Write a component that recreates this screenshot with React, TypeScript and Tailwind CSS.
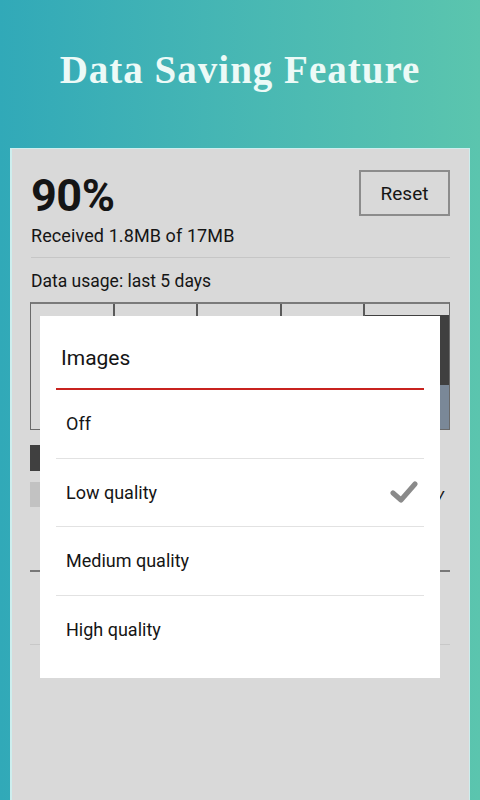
import React from 'react';

const options = ['Off', 'Low quality', 'Medium quality', 'High quality'];

const CheckMark: React.FC = () => (
  <svg width="28" height="24" viewBox="0 0 28 24" fill="none">
    <path d="M3 13 L11 20 L25 4" stroke="#8a8a8a" strokeWidth="5" strokeLinecap="round" strokeLinejoin="round" />
  </svg>
);

const App: React.FC = () => {
  const selected = 'Low quality';

  return (
    <div className="w-[480px] h-[800px] flex flex-col bg-gradient-to-r from-[#31a9b8] to-[#5bc5ae] font-['Roboto','Liberation_Sans',sans-serif] text-[#151515] overflow-hidden">
      {/* Header */}
      <div className="h-[148px] flex items-center justify-center pb-[8px]">
        <h1 className="font-['Liberation_Serif',serif] font-bold text-[39px] text-[#ecfaf7] tracking-[1px]">
          Data Saving Feature
        </h1>
      </div>

      {/* Card */}
      <div className="relative flex-1 mx-[10px] bg-[#d9d9d9] border-l-2 border-r border-t border-[#cdeeee]">
        <div className="pl-[19px] pr-[19px]">
          {/* Top row */}
          <div className="flex justify-between items-start pt-[21px]">
            <div className="text-[45px] font-bold leading-none mt-[3px] tracking-[-0.5px]">90%</div>
            <button className="w-[91px] h-[46px] border-2 border-[#8c8c8c] text-[19px] flex items-center justify-center pt-[3px]">
              Reset
            </button>
          </div>
          <div className="text-[18px] leading-[24px] mt-[6px] tracking-[0.1px]">Received 1.8MB of 17MB</div>
          <div className="h-px bg-[#c6c6c6] mt-[9px]" />

          <div className="text-[17.5px] leading-[24px] mt-[11px]">Data usage: last 5 days</div>

          {/* Chart */}
          <div className="mt-[9px] h-[128px] -ml-px border border-[#6a6a6a] border-t-2 border-t-[#7a7a7a] grid grid-cols-5">
            <div className="border-r-2 border-[#5a5a5a]" />
            <div className="border-r-2 border-[#5a5a5a]" />
            <div className="border-r-2 border-[#5a5a5a]" />
            <div className="border-r-2 border-[#5a5a5a]" />
            <div className="flex flex-col pt-[11px]">
              <div className="h-[70px] bg-[#404040]" />
              <div className="flex-1 bg-[#7a8898]" />
            </div>
          </div>

          {/* Legend */}
          <div className="mt-[15px] flex items-center h-[26px]">
            <div className="w-[26px] h-[26px] bg-[#404040] -ml-px" />
          </div>
          <div className="mt-[11px] flex items-center justify-between h-[25px]">
            <div className="w-[26px] h-[25px] bg-[#c2c2c2] -ml-px" />
            <div className="text-[17px] italic mr-[6px]">Saved today</div>
          </div>

          <div className="mt-[63px] h-[2px] bg-[#777777] -ml-px" />
          <div className="mt-[72px] h-px bg-[#c8c8c8] -ml-px" />
        </div>

        {/* Images dialog */}
        <div className="absolute left-[28px] top-[167px] w-[400px] bg-white px-[16px] pb-[14px]">
          <div className="h-[74px] border-b-2 border-[#c8231f] flex items-center pl-[5px] pt-[14px]">
            <span className="text-[21px]">Images</span>
          </div>
          {options.map((opt, i) => (
            <div
              key={opt}
              className={`h-[68.5px] flex items-center justify-between pl-[10px] pr-[6px] ${i < options.length - 1 ? 'border-b border-[#e2e2e2]' : ''}`}
            >
              <span className="text-[18px]">{opt}</span>
              {opt === selected && <CheckMark />}
            </div>
          ))}
        </div>
      </div>
    </div>
  );
};

export default App;
